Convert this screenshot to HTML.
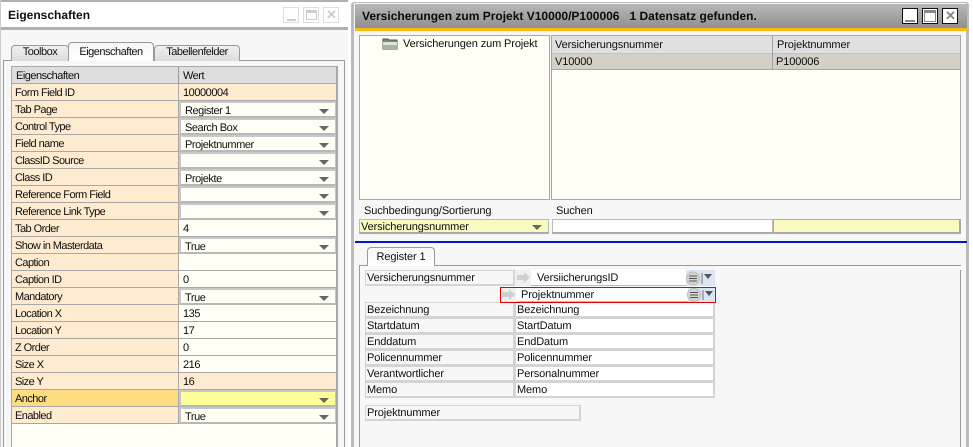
<!DOCTYPE html>
<html><head><meta charset="utf-8"><style>
html,body{margin:0;padding:0}
body{width:973px;height:447px;position:relative;overflow:hidden;background:#fff;font:11px/14px "Liberation Sans",sans-serif;color:#0e0e0e;text-rendering:geometricPrecision;letter-spacing:-.12px}
div{position:absolute;box-sizing:border-box;white-space:pre}
.n{letter-spacing:-.5px}
.l{left:12px;width:166px;height:17px;background:#feebd0;border-bottom:1px solid #a8a8a8;padding:2px 0 0 3px;letter-spacing:-.55px}
.v{left:179px;width:157px;height:17px;border-bottom:1px solid #a8a8a8;padding:2px 0 0 4px;letter-spacing:-.45px}
.o{background:#feebd0}.c{background:#fffff6}
.d{left:179px;width:157px;height:17px;background:#fffff6;border:1px solid #c4c4c4;border-top:2px solid #c8c8c8;border-left:2px solid #c8c8c8;border-bottom:2px solid #b8b8b8;padding:2px 0 0 4px;line-height:12px;letter-spacing:-.45px;overflow:visible}
.a{width:0;height:0;border:5px solid transparent;border-top:5px solid #666;border-bottom:0}
.g{background:#f7f7f7;border:1px solid #d4d4d4;border-width:1px 2px 2px 1px;height:16px;padding-left:1px;line-height:14px}
.w{background:#fff;border:1px solid #d4d4d4;border-width:1px 2px 2px 1px;height:16px;padding-left:1px;line-height:14px}
.b{width:16px;height:16px;background:#fff;border:1px solid #ddd}
</style></head><body>
<div style="left:0;top:0;width:351px;height:447px;background:#f7f7f7"></div>
<div style="left:0;top:0;width:351px;height:2px;background:#b0b0b0"></div>
<div style="left:1px;top:2px;width:347px;height:25px;background:#fff"></div>
<div style="left:1px;top:27px;width:347px;height:3px;background:#b4aeb0"></div>
<div style="left:0;top:0;width:1px;height:447px;background:#ccc"></div>
<div style="left:348px;top:0;width:3px;height:447px;background:#fff"></div>
<div style="left:8px;top:8px;font-weight:bold;font-size:12px;color:#111;letter-spacing:0">Eigenschaften</div>
<div class="b" style="left:283px;top:7px"></div><div style="left:287px;top:19px;width:9px;height:2px;background:#ccc"></div>
<div class="b" style="left:303px;top:7px"></div><div style="left:306px;top:10px;width:11px;height:10px;border:1px solid #ccc;border-top:3px solid #ccc"></div>
<div class="b" style="left:323px;top:7px"></div><div style="left:326px;top:8px;font:bold 13px/14px 'Liberation Sans';color:#ccc">✕</div>
<div style="left:3px;top:60px;width:342px;height:387px;border:1px solid #999;border-bottom:0;background:#f7f7f7"></div>
<div class="n" style="left:11px;top:45px;width:58px;height:16px;background:linear-gradient(#f0f0f0,#ddd);border:1px solid #999;border-bottom:0;border-radius:4px 4px 0 0;text-align:center;line-height:13px">Toolbox</div>
<div class="n" style="left:154px;top:45px;width:86px;height:16px;background:linear-gradient(#f0f0f0,#ddd);border:1px solid #999;border-bottom:0;border-radius:4px 4px 0 0;text-align:center;line-height:13px">Tabellenfelder</div>
<div class="n" style="left:68px;top:42px;width:86px;height:19px;background:linear-gradient(#f7f7f7,#fff);border:1px solid #999;border-bottom:0;border-radius:4px 4px 0 0;text-align:center;line-height:18px">Eigenschaften</div>
<div style="left:69px;top:60px;width:84px;height:1px;background:#fff"></div>
<div style="left:11px;top:66px;width:327px;height:381px;background:#fffff6;border:1px solid #a8a8a8;border-bottom:0;border-right:2px solid #a8a8a8"></div>
<div style="left:178px;top:67px;width:1px;height:357px;background:#a8a8a8"></div>
<div style="left:12px;top:67px;width:324px;height:17px;background:#dedede;border-bottom:1px solid #a8a8a8"></div>
<div style="left:178px;top:67px;width:1px;height:17px;background:#999"></div>
<div class="n" style="left:16px;top:69px">Eigenschaften</div><div class="n" style="left:183px;top:69px">Wert</div>

<div class="l" style="top:84px">Form Field ID</div><div class="v o" style="top:84px">10000004</div>
<div class="l" style="top:101px">Tab Page</div><div class="d" style="top:101px">Register 1</div><div class="a" style="left:319px;top:109px"></div>
<div class="l" style="top:118px">Control Type</div><div class="d" style="top:118px">Search Box</div><div class="a" style="left:319px;top:126px"></div>
<div class="l" style="top:135px">Field name</div><div class="d" style="top:135px">Projektnummer</div><div class="a" style="left:319px;top:143px"></div>
<div class="l" style="top:152px">ClassID Source</div><div class="d" style="top:152px"></div><div class="a" style="left:319px;top:160px"></div>
<div class="l" style="top:169px">Class ID</div><div class="d" style="top:169px">Projekte</div><div class="a" style="left:319px;top:177px"></div>
<div class="l" style="top:186px">Reference Form Field</div><div class="d" style="top:186px"></div><div class="a" style="left:319px;top:194px"></div>
<div class="l" style="top:203px">Reference Link Type</div><div class="d" style="top:203px"></div><div class="a" style="left:319px;top:211px"></div>
<div class="l" style="top:220px">Tab Order</div><div class="v c" style="top:220px">4</div>
<div class="l" style="top:237px">Show in Masterdata</div><div class="d" style="top:237px">True</div><div class="a" style="left:319px;top:245px"></div>
<div class="l" style="top:254px">Caption</div><div class="v c" style="top:254px"></div>
<div class="l" style="top:271px">Caption ID</div><div class="v c" style="top:271px">0</div>
<div class="l" style="top:288px">Mandatory</div><div class="d" style="top:288px">True</div><div class="a" style="left:319px;top:296px"></div>
<div class="l" style="top:305px">Location X</div><div class="v c" style="top:305px">135</div>
<div class="l" style="top:322px">Location Y</div><div class="v c" style="top:322px">17</div>
<div class="l" style="top:339px">Z Order</div><div class="v c" style="top:339px">0</div>
<div class="l" style="top:356px">Size X</div><div class="v c" style="top:356px">216</div>
<div class="l" style="top:373px">Size Y</div><div class="v o" style="top:373px">16</div>
<div class="l" style="top:390px;background:#fddc82">Anchor</div><div class="d" style="top:390px;background:#ffff99"></div><div class="a" style="left:319px;top:398px"></div>
<div class="l" style="top:407px">Enabled</div><div class="d" style="top:407px">True</div><div class="a" style="left:319px;top:415px"></div>

<!-- right window -->
<div style="left:351px;top:2px;width:618px;height:445px;background:#f7f7f7;border:1px solid #bbb;border-bottom:0;border-width:1px 3px 0 3px;border-radius:3px 3px 0 0"></div>
<div style="left:355px;top:4px;width:612px;height:25px;background:linear-gradient(#b8b8b8,#8e8e8e)"></div>
<div style="left:355px;top:28px;width:612px;height:3px;background:#fdb912"></div>
<div style="left:362px;top:9px;font-weight:bold;font-size:12px;line-height:14px;color:#0c0c0c;letter-spacing:0">Versicherungen zum Projekt V10000/P100006   1 Datensatz gefunden.</div>
<div class="b" style="left:902px;top:8px;border:1px solid #111"></div><div style="left:905px;top:20px;width:10px;height:2px;background:#888"></div>
<div class="b" style="left:922px;top:8px;border:1px solid #111"></div><div style="left:924px;top:10px;width:12px;height:12px;border:1px solid #888;border-top:3px solid #888"></div>
<div class="b" style="left:942px;top:8px;border:1px solid #111"></div><div style="left:945px;top:9px;font:bold 13px/14px 'Liberation Sans';color:#888">✕</div>

<div style="left:359px;top:35px;width:191px;height:165px;background:#fffff6;border:1px solid #a8a8a8"></div>
<svg style="position:absolute;left:382px;top:37px" width="17" height="13" viewBox="0 0 17 13"><path d="M1 12V2h5l1 1h8v9z" fill="#7d8a78" stroke="#555"/><path d="M1 5h14v3H1z" fill="#dfe6d8"/><path d="M1 8h14v4H1z" fill="#a9b59f"/></svg>
<div style="left:403px;top:37px">Versicherungen zum Projekt</div>
<div style="left:551px;top:35px;width:410px;height:165px;background:#fffff6;border:1px solid #a8a8a8"></div>
<div style="left:552px;top:36px;width:408px;height:17px;background:#e0e0e0"></div>
<div style="left:552px;top:53px;width:408px;height:17px;background:#d4d0c8;border-bottom:1px solid #a8a8a8;border-top:1px solid #c4c4c4"></div>
<div style="left:772px;top:36px;width:1px;height:34px;background:#a0a0a0"></div>
<div style="left:555px;top:38px">Versicherungsnummer</div><div style="left:777px;top:38px">Projektnummer</div>
<div style="left:555px;top:55px">V10000</div><div style="left:776px;top:55px">P100006</div>

<div style="left:364px;top:204px">Suchbedingung/Sortierung</div><div style="left:556px;top:204px">Suchen</div>
<div style="left:359px;top:219px;width:190px;height:15px;background:#fafac0;border:1px solid #bbb;border-bottom:2px solid #aaa;padding-left:1px;line-height:15px">Versicherungsnummer</div>
<div class="a" style="left:532px;top:225px"></div>
<div style="left:552px;top:219px;width:221px;height:15px;background:#fff;border:1px solid #bbb;border-bottom:2px solid #aaa"></div>
<div style="left:773px;top:219px;width:188px;height:15px;background:#fafac0;border:1px solid #aaa;border-right:2px solid #aaa;border-bottom:2px solid #aaa"></div>
<div style="left:355px;top:241px;width:612px;height:2px;background:#0018cc"></div>

<div style="left:359px;top:265px;width:602px;height:182px;border-top:1px solid #999;border-left:1px solid #999"></div>
<div style="left:960px;top:270px;width:1px;height:177px;background:#999"></div>
<div style="left:367px;top:247px;width:68px;height:19px;background:linear-gradient(#f7f7f7,#fff);border:1px solid #999;border-bottom:0;border-radius:4px 4px 0 0;text-align:center;line-height:18px">Register 1</div>

<div class="g" style="left:365px;top:270px;width:150px">Versicherungsnummer</div>
<div style="left:515px;top:270px;width:200px;height:16px;background:#dce6f2"></div>
<div style="left:515px;top:270px;width:16px;height:16px;background:#f0f0f0"></div>
<div style="left:531px;top:270px;width:155px;height:16px;background:#fff;border-bottom:1px solid #bbb;padding-left:6px;line-height:16px">VersiicherungsID</div>
<svg style="position:absolute;left:516px;top:272px" width="15" height="11" viewBox="0 0 15 11"><path d="M1 3h7V0l6 5.500-6 5.500V8H1z" fill="#d0d0d0"/></svg>
<svg style="position:absolute;left:686px;top:271px" width="28" height="15" viewBox="0 0 28 15"><circle cx="7" cy="7.500" r="6.500" fill="#d4d4d4" stroke="#bbb"/><path d="M3 5h8M3 7.500h8M3 10h8" stroke="#555"/><path d="M16 2v11" stroke="#777"/><path d="M18 3h8l-4 5z" fill="#555"/></svg>

<div style="left:501px;top:288px;width:214px;height:14px;background:#dce6f2"></div>
<div style="left:501px;top:288px;width:15px;height:14px;background:#f0f0f0"></div>
<div style="left:516px;top:288px;width:172px;height:14px;background:#fff;border-bottom:1px solid #bbb;padding-left:5px;line-height:14px">Projektnummer</div>
<svg style="position:absolute;left:501px;top:289px" width="15" height="11" viewBox="0 0 15 11"><path d="M1 3h7V0l6 5.500-6 5.500V8H1z" fill="#d0d0d0"/></svg>
<svg style="position:absolute;left:687px;top:288px" width="28" height="14" viewBox="0 0 28 14"><circle cx="7" cy="7" r="6.500" fill="#d4d4d4" stroke="#bbb"/><path d="M3 4.500h8M3 7h8M3 9.500h8" stroke="#555"/><path d="M16 2v10" stroke="#777"/><path d="M18 3h8l-4 5z" fill="#555"/></svg>

<div class="g" style="left:365px;top:302px;width:150px">Bezeichnung</div><div class="w" style="left:515px;top:302px;width:200px">Bezeichnung</div>
<div class="g" style="left:365px;top:318px;width:150px">Startdatum</div><div class="w" style="left:515px;top:318px;width:200px">StartDatum</div>
<div class="g" style="left:365px;top:334px;width:150px">Enddatum</div><div class="w" style="left:515px;top:334px;width:200px">EndDatum</div>
<div class="g" style="left:365px;top:350px;width:150px">Policennummer</div><div class="w" style="left:515px;top:350px;width:200px">Policennummer</div>
<div class="g" style="left:365px;top:366px;width:150px">Verantwortlicher</div><div class="w" style="left:515px;top:366px;width:200px">Personalnummer</div>
<div class="g" style="left:365px;top:382px;width:150px">Memo</div><div class="w" style="left:515px;top:382px;width:200px">Memo</div>
<div class="g" style="left:365px;top:405px;width:216px">Projektnummer</div>
<div style="left:500px;top:287px;width:216px;height:16px;border:1px solid #e60000"></div>
</body></html>
